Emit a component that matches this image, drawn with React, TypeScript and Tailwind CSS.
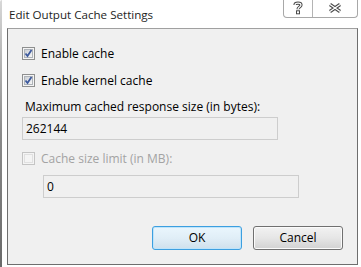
import React from "react";

const font = { fontFamily: '"Open Sans", "Noto Sans", Arial, sans-serif' };

function CheckBox({ checked, disabled }: { checked?: boolean; disabled?: boolean }) {
  return (
    <div
      className={
        "w-[13px] h-[13px] shrink-0 border flex items-center justify-center " +
        (disabled ? "border-[#c4c4c4] bg-[#f4f4f4]" : "border-[#8e8f8f] bg-[#f4f4f4]")
      }
    >
      <div
        className={
          "w-[9px] h-[9px] border flex items-center justify-center " +
          (disabled
            ? "border-[#e0e0e0] bg-[#f4f4f4]"
            : "border-[#aeb3b9] bg-gradient-to-br from-[#cbcfd5] to-[#f6f6f6]")
        }
      >
        {checked && (
          <svg width="9" height="9" viewBox="0 0 9 9" className="-m-[1px]">
            <path d="M1.5 4.5 L3.5 7 L7.5 1" fill="none" stroke="#3d5a9e" strokeWidth="1.8" />
          </svg>
        )}
      </div>
    </div>
  );
}

function HelpIcon() {
  const d = "M2 4 C2 1.5 8 1.5 8 4 C8 6 5 6 5 8.2";
  return (
    <svg width="10" height="14" viewBox="0 0 10 14">
      <path d={d} fill="none" stroke="#4a4a4a" strokeWidth="3.2" strokeLinecap="butt" />
      <path d={d} fill="none" stroke="#ffffff" strokeWidth="1.2" />
      <rect x="3.5" y="9.8" width="3" height="3" fill="#ffffff" stroke="#4a4a4a" strokeWidth="1" />
    </svg>
  );
}

function CloseIcon() {
  return (
    <svg width="14" height="10" viewBox="0 0 14 10">
      <path d="M2 1.5 L12 8.5 M12 1.5 L2 8.5" fill="none" stroke="#4a4a4a" strokeWidth="3.4" />
      <path d="M2 1.5 L12 8.5 M12 1.5 L2 8.5" fill="none" stroke="#ffffff" strokeWidth="1.3" />
    </svg>
  );
}

export default function App() {
  return (
    <div className="w-[361px] h-[267px] flex bg-white overflow-hidden text-[12px] text-black" style={font}>
      <div className="w-[2px] h-full bg-gradient-to-b from-[#d8d8d8] via-[#8a8a8a] to-[#6a6a6a] rounded-tl-[4px]" />
      <div className="flex-1 flex flex-col pl-[5px] pr-[3px]">
        <div className="h-[28px] flex items-start justify-between">
          <div className="pl-[2px] pt-[7px] text-[11.6px] leading-[16px] text-[#1e1e1e]">Edit Output Cache Settings</div>
          <div className="flex h-[18px] border border-t-0 border-[#a8a8a8] rounded-b-[4px] bg-white">
            <div className="w-[29px] flex items-start justify-center pt-[1px] border-r border-[#b4b4b4]">
              <HelpIcon />
            </div>
            <div className="w-[44px] flex items-start justify-center pt-[3px]">
              <CloseIcon />
            </div>
          </div>
        </div>
        <div className="w-[351px] h-[237px] border border-[#6e6e6e] border-t-[#a0a0a0] bg-[#f0f0f0] flex flex-col pl-[14px]">
          <div className="mt-[18px] flex items-center h-[13px]">
            <CheckBox checked />
            <span className="ml-[6px] leading-[16px]">Enable cache</span>
          </div>
          <div className="mt-[14px] flex items-center h-[13px]">
            <CheckBox checked />
            <span className="ml-[6px] leading-[16px]">Enable kernel cache</span>
          </div>
          <div className="mt-[12px] pl-[3px] leading-[15px]">Maximum cached response size (in bytes):</div>
          <div className="mt-[3px] w-[256px] h-[23px] border border-[#cdcdcd] bg-[#f0f0f0] flex items-center pl-[3px]">
            262144
          </div>
          <div className="mt-[12px] flex items-center h-[13px]">
            <CheckBox disabled />
            <span className="ml-[6px] leading-[16px] text-[#a3a3a3]">Cache size limit (in MB):</span>
          </div>
          <div className="mt-[10px] ml-[21px] w-[256px] h-[23px] border border-[#cdcdcd] bg-[#f0f0f0] flex items-center pl-[3px]">
            0
          </div>
          <div className="mt-[28px] flex justify-end gap-[11px] pr-[14px]">
            <button className="w-[90px] h-[24px] rounded-[3px] border border-[#3c9fe0] bg-gradient-to-b from-[#eaf6fd] via-[#e0eef7] to-[#cfe0ec] shadow-[inset_0_0_0_1px_#bfe4fa] leading-[20px]">
              OK
            </button>
            <button className="w-[90px] h-[24px] rounded-[3px] border border-[#707070] bg-gradient-to-b from-[#f2f2f2] via-[#e6e6e6] to-[#d2d2d2] shadow-[inset_0_0_0_1px_#fbfbfb] leading-[20px]">
              Cancel
            </button>
          </div>
        </div>
      </div>
    </div>
  );
}
